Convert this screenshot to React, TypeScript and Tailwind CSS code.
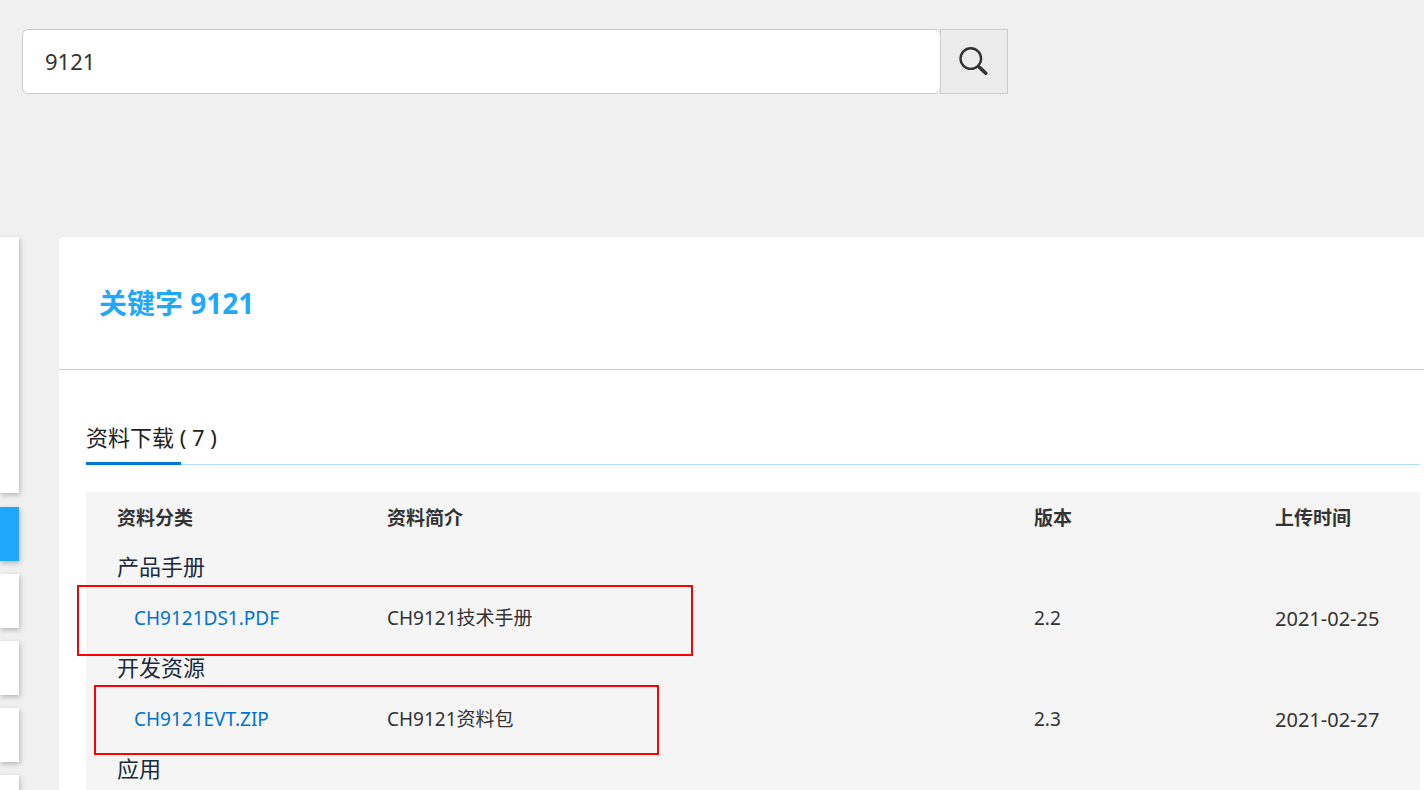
import { Fragment, useState } from "react";

type Archivo = { name: string; desc: string; version: string; date: string; mark: string };
type Grupo = { id: string; label: string; items: Archivo[] };

const GRUPOS: Grupo[] = [
  {
    id: "manual", label: "产品手册",
    items: [
      { name: "CH9121DS1.PDF", desc: "CH9121技术手册", version: "2.2", date: "2021-02-25", mark: "-top-[7px] -left-[9px] w-[616px] h-[71px]" },
    ],
  },
  {
    id: "dev", label: "开发资源",
    items: [
      { name: "CH9121EVT.ZIP", desc: "CH9121资料包", version: "2.3", date: "2021-02-27", mark: "-top-[8px] left-[8px] w-[565px] h-[70px]" },
    ],
  },
  { id: "app", label: "应用", items: [] },
];

const MENU = [
  { id: "m1", active: true },
  { id: "m2", active: false },
  { id: "m3", active: false },
  { id: "m4", active: false },
  { id: "m5", active: false },
];

function SearchIcon() {
  return (
    <svg width="32" height="32" viewBox="0 0 32 32" fill="none" stroke="#333" aria-hidden="true">
      <circle cx="12.8" cy="12.6" r="10.3" strokeWidth="2.4" />
      <path d="M20 20 L22 22" strokeWidth="2.6" />
      <path d="M21.8 21.6 L27.8 27.3" strokeWidth="3.6" strokeLinecap="round" />
    </svg>
  );
}

function SearchBar() {
  const [q, setQ] = useState("9121");
  return (
    <form className="mx-[22px] flex max-w-[986px]" onSubmit={(e) => e.preventDefault()}>
      <input
        type="text"
        aria-label="搜索"
        value={q}
        onChange={(e) => setQ(e.target.value)}
        className="h-[65px] min-w-0 flex-1 rounded-md border border-[#ccc] bg-white px-[22px] pb-[2px] text-[22px] text-[#333] outline-none"
      />
      <button type="submit" aria-label="搜索" className="-ml-px flex h-[65px] w-[68px] items-center justify-center border border-[#ccc] bg-[#ececec]">
        <SearchIcon />
      </button>
    </form>
  );
}

function Sidebar() {
  return (
    <aside className="w-[19px] shrink-0">
      <div className="mb-[14px] h-[256px] bg-white shadow-[1px_2px_5px_rgba(0,0,0,0.25)]" />
      <nav className="flex flex-col gap-[13px]">
        {MENU.map((m) => (
          <div key={m.id} className={m.active ? "h-[54px] bg-[#1fa8fc] shadow-[1px_2px_5px_rgba(0,0,0,0.25)]" : "h-[54px] bg-white shadow-[1px_2px_5px_rgba(0,0,0,0.25)]"} />
        ))}
      </nav>
    </aside>
  );
}

function DownloadTable() {
  return (
    <table className="w-full table-fixed border-collapse bg-[#f5f5f5] text-left text-[19px] text-[#333]">
      <colgroup>
        <col className="w-[270px]" />
        <col />
        <col className="w-[241px]" />
        <col className="w-[176px]" />
      </colgroup>
      <thead>
        <tr className="h-[50px]">
          <th className="p-0 pt-[2px] pl-[31px] font-bold">资料分类</th>
          <th className="p-0 pt-[2px] pl-[31px] font-bold">资料简介</th>
          <th className="p-0 pt-[2px] pl-[31px] font-bold">版本</th>
          <th className="p-0 pt-[2px] pl-[31px] font-bold">上传时间</th>
        </tr>
      </thead>
      <tbody>
        {GRUPOS.map((g) => (
          <Fragment key={g.id}>
            <tr className="h-[50px]">
              <td colSpan={4} className="p-0 pb-[2px] pl-[31px] text-[22px] leading-[30px] text-[#1b2a3a]">{g.label}</td>
            </tr>
            {g.items.map((it) => (
              <tr key={it.name} className="relative h-[51px]">
                <td className="p-0 pt-[2px] pl-[48px]">
                  <a href="#" className="text-[#0073d1]">{it.name}</a>
                  {/* highlight frame */}
                  <span className={`pointer-events-none absolute border-2 border-[#ff0000] ${it.mark}`} />
                </td>
                <td className="p-0 pt-[2px] pl-[31px]">{it.desc}</td>
                <td className="p-0 pt-[2px] pl-[31px]">{it.version}</td>
                <td className="p-0 pt-[2px] pl-[31px] text-[20px] whitespace-nowrap">{it.date}</td>
              </tr>
            ))}
          </Fragment>
        ))}
      </tbody>
    </table>
  );
}

export default function App() {
  return (
    <div className="h-screen overflow-hidden bg-[#f0f0f0] pt-[29px] font-['Noto_Sans','Noto_Sans_CJK_SC',sans-serif]">
      <SearchBar />
      <div className="mt-[143px] flex gap-10">
        <Sidebar />
        <main className="min-w-0 flex-1 rounded-tl bg-white">
          <header className="flex h-[133px] items-center border-b border-[#ccc] px-10">
            <h1 className="text-[28px] font-bold text-[#1fa8fc]">关键字 9121</h1>
          </header>
          <section className="pt-[50px] pr-1 pl-[27px]">
            <div className="mb-[27px] flex h-[45px] border-b border-[#b3defc]">
              <h2 className="-mb-px w-[95px] border-b-[3px] border-[#0078d7] text-[22px] leading-[34px] whitespace-nowrap text-[#222]">资料下载 ( 7 )</h2>
            </div>
            <DownloadTable />
          </section>
        </main>
      </div>
    </div>
  );
}
